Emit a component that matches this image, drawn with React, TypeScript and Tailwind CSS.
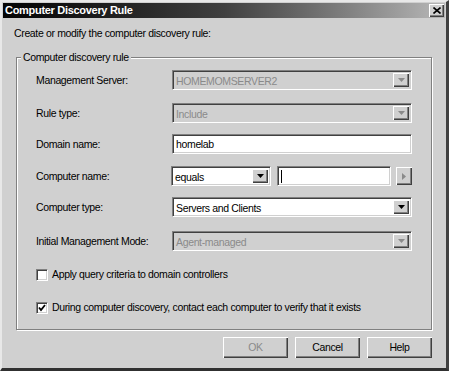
import React from 'react';

const font = { fontFamily: '"Liberation Sans", Arial, sans-serif' };

const sunken =
  'border border-t-[#808080] border-l-[#808080] border-r-white border-b-white shadow-[inset_1px_1px_0_#404040,inset_-1px_-1px_0_#d0d0d0]';
const raised =
  'shadow-[inset_1px_1px_0_#ffffff,inset_-1px_-1px_0_#404040,inset_-2px_-2px_0_#808080] bg-[#d0d0d0]';

const Arrow = ({ disabled, dir = 'down' }: { disabled?: boolean; dir?: 'down' | 'right' }) => (
  <div className={`w-[16px] h-full flex items-center justify-center ${raised}`}>
    {dir === 'down' ? (
      <svg width="7" height="4" viewBox="0 0 7 4">
        <path d="M0 0h7L3.5 4z" fill={disabled ? '#8a8a8a' : '#000'} />
      </svg>
    ) : (
      <svg width="4" height="7" viewBox="0 0 4 7">
        <path d="M0 0v7L4 3.5z" fill="#8a8a8a" />
      </svg>
    )}
  </div>
);

const Combo = ({ value, disabled, className = '' }: { value: string; disabled?: boolean; className?: string }) => (
  <div className={`h-[20px] flex items-stretch p-[2px] ${sunken} ${disabled ? 'bg-[#d0d0d0]' : 'bg-white'} ${className}`}>
    <div className={`flex-1 pl-[1px] leading-[16px] ${disabled ? 'text-[#8a8a8a]' : 'text-black'}`}>{value}</div>
    <Arrow disabled={disabled} />
  </div>
);

const Row = ({ label, children, top }: { label: string; children: React.ReactNode; top: string }) => (
  <div className={`flex items-center h-[20px] ${top}`}>
    <div className="w-[136px] text-black">{label}</div>
    <div className="flex-1 flex items-center">{children}</div>
  </div>
);

const Checkbox = ({ checked, label, top }: { checked?: boolean; label: string; top: string }) => (
  <div className={`flex items-center gap-[4px] h-[13px] ${top}`}>
    <div className={`w-[12px] h-[12px] bg-white flex items-center justify-center ${sunken}`}>
      {checked && (
        <svg width="8" height="8" viewBox="0 0 8 8">
          <path d="M1 3.5l2 2.5 4-5" stroke="#000" strokeWidth="1.8" fill="none" />
        </svg>
      )}
    </div>
    <span>{label}</span>
  </div>
);

const Button = ({ children, disabled }: { children: React.ReactNode; disabled?: boolean }) => (
  <div
    className={`w-[65px] h-[21px] flex items-center justify-center ${raised} ${disabled ? 'text-[#8a8a8a]' : 'text-black'}`}
  >
    {children}
  </div>
);

export default function App() {
  return (
    <div
      className="w-[449px] h-[371px] bg-[#d0d0d0] text-[10.5px] leading-[13px] tracking-[-0.35px] border-l-[2px] border-t-[2px] border-l-[#e8e8e8] border-t-[#e8e8e8] border-r-[3px] border-b-[3px] border-r-[#404040] border-b-[#303030] flex flex-col"
      style={font}
    >
      <div className="mx-[1px] mt-[1px] h-[15px] flex items-center justify-between bg-gradient-to-r from-[#050505] via-[#404040] to-[#b8b8b8] pl-[2px] pr-[1px]">
        <span className="text-white font-bold text-[11px] tracking-[-0.3px]">Computer Discovery Rule</span>
        <div className={`w-[15px] h-[13px] flex items-center justify-center ${raised}`}>
          <svg width="8" height="7" viewBox="0 0 8 7">
            <path d="M0.5 0.5l7 6M7.5 0.5l-7 6" stroke="#000" strokeWidth="1.6" />
          </svg>
        </div>
      </div>

      <div className="pl-[12px] mt-[9px]">Create or modify the computer discovery rule:</div>

      <div className="relative ml-[14px] mr-[14px] mt-[17px] h-[273px] border border-[#808080] shadow-[1px_1px_0_#ffffff,inset_1px_1px_0_#ffffff] px-[19px] flex flex-col">
        <span className="absolute -top-[7px] left-[4px] px-[2px] bg-[#d0d0d0]">Computer discovery rule</span>
        <Row label="Management Server:" top="mt-[12px]">
          <Combo value="HOMEMOMSERVER2" disabled className="flex-1" />
        </Row>
        <Row label="Rule type:" top="mt-[13px]">
          <Combo value="Include" disabled className="flex-1" />
        </Row>
        <Row label="Domain name:" top="mt-[11px]">
          <div className={`flex-1 h-[20px] bg-white pl-[3px] leading-[18px] ${sunken}`}>homelab</div>
        </Row>
        <Row label="Computer name:" top="mt-[12px]">
          <Combo value="equals" className="w-[100px]" />
          <div className={`ml-[6px] w-[114px] h-[20px] bg-white pl-[3px] flex items-center ${sunken}`}>
            <div className="w-[1px] h-[13px] bg-black" />
          </div>
          <div className="ml-[5px] h-[18px]">
            <Arrow dir="right" />
          </div>
        </Row>
        <Row label="Computer type:" top="mt-[11px]">
          <Combo value="Servers and Clients" className="flex-1" />
        </Row>
        <Row label="Initial Management Mode:" top="mt-[14px]">
          <Combo value="Agent-managed" disabled className="flex-1" />
        </Row>
        <Checkbox label="Apply query criteria to domain controllers" top="mt-[17px]" />
        <Checkbox checked label="During computer discovery, contact each computer to verify that it exists" top="mt-[20px]" />
      </div>

      <div className="flex justify-end gap-[7px] mr-[14px] mt-[7px]">
        <Button disabled>OK</Button>
        <Button>Cancel</Button>
        <Button>Help</Button>
      </div>
    </div>
  );
}
